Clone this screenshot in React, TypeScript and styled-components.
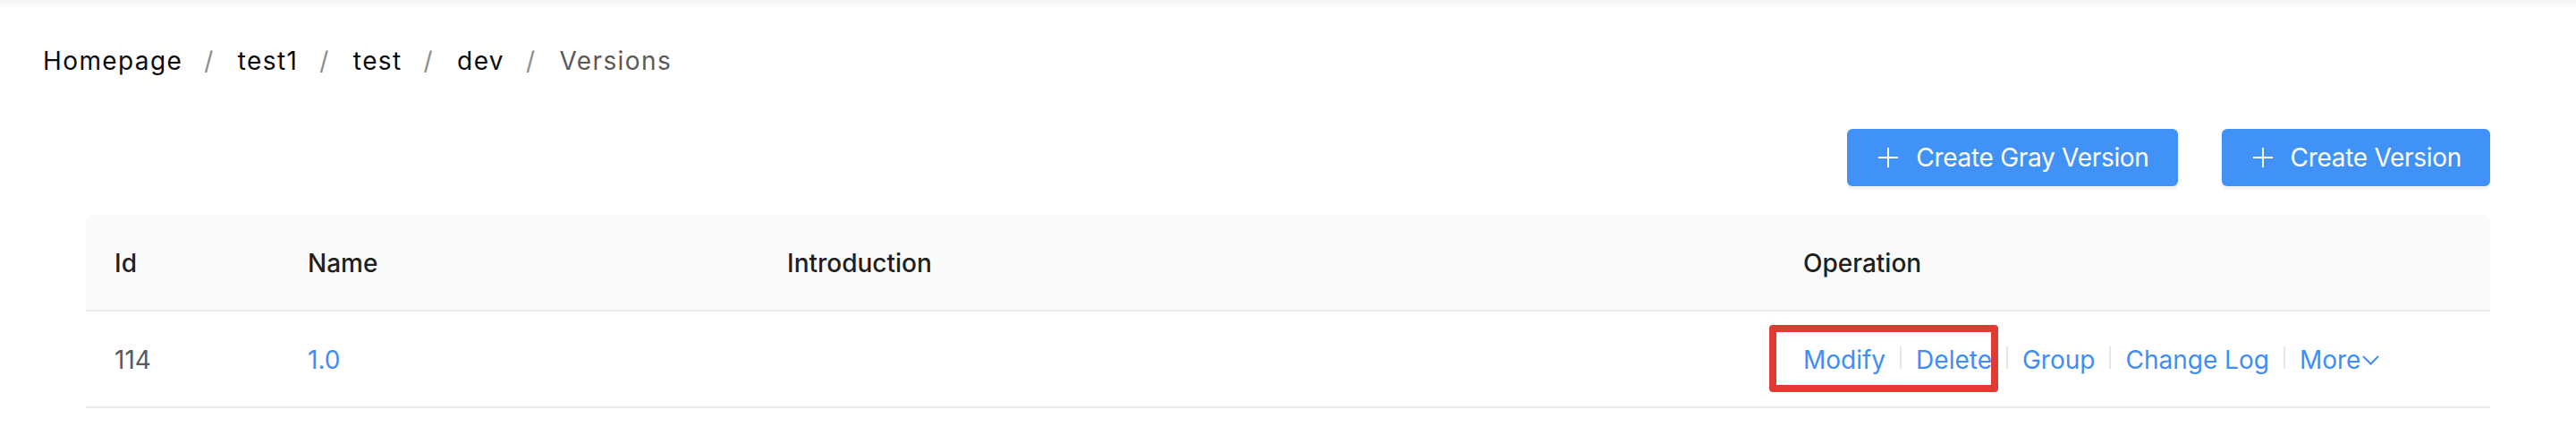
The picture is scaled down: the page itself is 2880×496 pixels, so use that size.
import styled, { createGlobalStyle } from "styled-components";

const GlobalStyle = createGlobalStyle`
  body {
    margin: 0;
    background: #ffffff;
    font-family: Inter, "Noto Sans", "Liberation Sans", sans-serif;
  }
`;

const TopShadow = styled.div`
  height: 10px;
  background: linear-gradient(to bottom, #f4f4f4, #ffffff);
`;

const Page = styled.div`
  padding: 36px 48px 0 48px;
`;

const Breadcrumb = styled.nav`
  display: flex;
  align-items: center;
  font-size: 28px;
  line-height: 44px;
  letter-spacing: 1.4px;
`;

const Crumb = styled.span<{ last?: boolean }>`
  color: ${(props) => (props.last ? "#5a5a5a" : "#0a0a0a")};
`;

const Separator = styled.span`
  margin: 0 26px 0 24px;
  color: #8c8c8c;
`;

const Content = styled.div`
  padding: 0 48px;
`;

const Toolbar = styled.div`
  display: flex;
  justify-content: flex-end;
  gap: 49px;
  margin-top: 54px;
`;

const PrimaryButton = styled.button`
  display: flex;
  align-items: center;
  gap: 20px;
  height: 64px;
  padding: 0 32px 0 35px;
  border: none;
  border-radius: 6px;
  background: #4192f7;
  color: #ffffff;
  font-family: inherit;
  font-size: 28px;
  letter-spacing: -0.3px;
  box-shadow: 0 4px 0 rgba(0, 0, 0, 0.045);
  cursor: pointer;
`;

const Table = styled.div`
  margin-top: 32px;
`;

const Row = styled.div<{ head?: boolean }>`
  display: grid;
  grid-template-columns: 216px 536px 1136px 1fr;
  height: 106px;
  border-bottom: 2px solid #ebebeb;
  background: ${(props) => (props.head ? "#fafafa" : "#ffffff")};
  border-radius: ${(props) => (props.head ? "8px 8px 0 0" : "0")};
`;

const Cell = styled.div<{ head?: boolean }>`
  position: relative;
  display: flex;
  align-items: center;
  padding: 2px 32px 0 32px;
  font-size: 28px;
  line-height: 44px;
  font-weight: ${(props) => (props.head ? 500 : 400)};
  color: ${(props) => (props.head ? "#1f1f1f" : "#5a5a5a")};
`;

const Link = styled.a`
  color: #3e8ef7;
  text-decoration: none;
  cursor: pointer;
  display: inline-flex;
  align-items: center;
`;

const Divider = styled.span`
  display: inline-block;
  width: 2px;
  height: 25px;
  margin: 0 16px;
  background: #e6e6e6;
`;

const Highlight = styled.div`
  position: absolute;
  left: -6px;
  top: 15px;
  width: 256px;
  height: 75px;
  box-sizing: border-box;
  border: 8px solid #e03b32;
  border-radius: 4px;
  pointer-events: none;
`;

const PlusIcon = () => (
  <svg width="22" height="22" viewBox="0 0 22 22">
    <path d="M11 0 V22 M0 11 H22" stroke="#ffffff" strokeWidth="2" fill="none" />
  </svg>
);

const ChevronDown = () => (
  <svg width="19" height="11" viewBox="0 0 19 11" style={{ marginLeft: 2 }}>
    <path d="M1 1 L9.5 9.5 L18 1" stroke="#3e8ef7" strokeWidth="2" fill="none" />
  </svg>
);

const crumbs = ["Homepage", "test1", "test", "dev", "Versions"];
const operations = ["Modify", "Delete", "Group", "Change Log"];

const App = () => {
  return (
    <>
      <GlobalStyle />
      <TopShadow />
      <Page>
        <Breadcrumb>
          {crumbs.map((crumb, i) => (
            <span key={crumb}>
              <Crumb last={i === crumbs.length - 1}>{crumb}</Crumb>
              {i < crumbs.length - 1 && <Separator>/</Separator>}
            </span>
          ))}
        </Breadcrumb>
        <Content>
          <Toolbar>
            <PrimaryButton>
              <PlusIcon />
              Create Gray Version
            </PrimaryButton>
            <PrimaryButton>
              <PlusIcon />
              Create Version
            </PrimaryButton>
          </Toolbar>
          <Table>
            <Row head>
              <Cell head>Id</Cell>
              <Cell head>Name</Cell>
              <Cell head>Introduction</Cell>
              <Cell head>Operation</Cell>
            </Row>
            <Row>
              <Cell>114</Cell>
              <Cell>
                <Link>1.0</Link>
              </Cell>
              <Cell />
              <Cell>
                <Highlight />
                {operations.map((op) => (
                  <span key={op}>
                    <Link>{op}</Link>
                    <Divider />
                  </span>
                ))}
                <Link>
                  More
                  <ChevronDown />
                </Link>
              </Cell>
            </Row>
          </Table>
        </Content>
      </Page>
    </>
  );
};

export default App;
